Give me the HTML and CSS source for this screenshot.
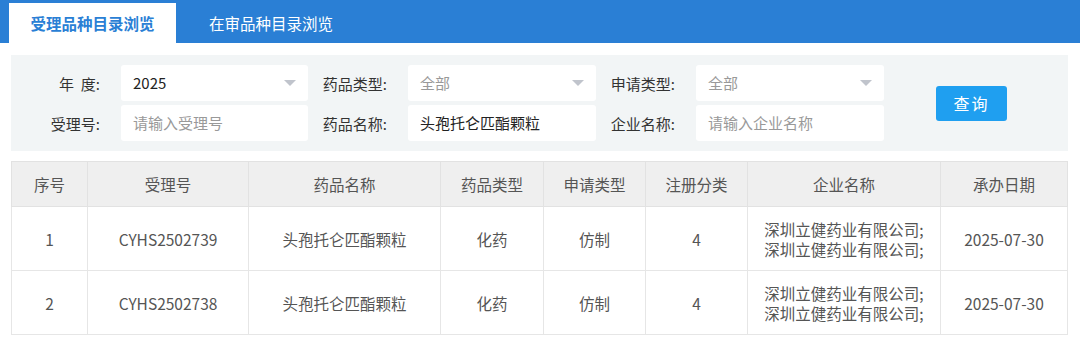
FILE: index.html
```html
<!DOCTYPE html>
<html lang="zh-CN">
<head>
    <meta charset="UTF-8">
    <title>受理品种目录浏览</title>
    <link rel="stylesheet" href="styles.css">
</head>
<body>

    <!-- Tabs -->
    <div class="tabs">
        <div class="tab active">受理品种目录浏览</div>
        <div class="tab">在审品种目录浏览</div>
    </div>

    <!-- Search panel -->
    <div class="search">
        <div class="fields">
            <label>年&nbsp;&nbsp;度:</label>
            <div class="input select">2025<span class="caret"></span></div>
            <label>药品类型:</label>
            <div class="input select muted">全部<span class="caret"></span></div>
            <label>申请类型:</label>
            <div class="input select muted">全部<span class="caret"></span></div>

            <label>受理号:</label>
            <div class="input placeholder">请输入受理号</div>
            <label>药品名称:</label>
            <div class="input">头孢托仑匹酯颗粒</div>
            <label>企业名称:</label>
            <div class="input placeholder">请输入企业名称</div>
        </div>
        <button class="btn">查询</button>
    </div>

    <!-- Result table -->
    <table class="result">
        <thead>
            <tr>
                <th class="c1">序号</th>
                <th class="c2">受理号</th>
                <th class="c3">药品名称</th>
                <th class="c4">药品类型</th>
                <th class="c5">申请类型</th>
                <th class="c6">注册分类</th>
                <th class="c7">企业名称</th>
                <th>承办日期</th>
            </tr>
        </thead>
        <tbody>
            <tr>
                <td>1</td>
                <td>CYHS2502739</td>
                <td>头孢托仑匹酯颗粒</td>
                <td>化药</td>
                <td>仿制</td>
                <td>4</td>
                <td>深圳立健药业有限公司;<br>深圳立健药业有限公司;</td>
                <td>2025-07-30</td>
            </tr>
            <tr>
                <td>2</td>
                <td>CYHS2502738</td>
                <td>头孢托仑匹酯颗粒</td>
                <td>化药</td>
                <td>仿制</td>
                <td>4</td>
                <td>深圳立健药业有限公司;<br>深圳立健药业有限公司;</td>
                <td>2025-07-30</td>
            </tr>
        </tbody>
    </table>

</body>
</html>
```

FILE: styles.css
```css
* {
    margin: 0;
    padding: 0;
    box-sizing: border-box;
}

body {
    font-family: "Noto Sans CJK SC", "Noto Sans", sans-serif;
    background-color: #fff;
    color: #333;
    font-size: 15px;
}

/* Tabs */
.tabs {
    display: flex;
    height: 43px;
    padding: 3px 0 0 9px;
    background-color: #2a7fd5;
}

.tab {
    width: 167px;
    line-height: 40px;
    text-align: center;
    color: #fff;
    font-size: 15.5px;
}

.tab.active {
    background-color: #fff;
    color: #2a7fd5;
    font-weight: 700;
}

.tab + .tab {
    margin-left: 33px;
    width: 124px;
}

/* Search panel */
.search {
    display: flex;
    align-items: center;
    margin: 12px 12px 0 11px;
    height: 96px;
    background-color: #f2f5f6;
}

.fields {
    display: grid;
    grid-template-columns: 110px 187px 100px 188px 100px 188px;
    row-gap: 4px;
    align-items: center;
}

.fields label {
    text-align: right;
    padding-right: 21px;
    color: #333;
}

.input {
    position: relative;
    height: 36px;
    line-height: 36px;
    padding-left: 12px;
    background-color: #fff;
    border-radius: 3px;
    color: #222;
}

.input.muted, .input.placeholder {
    color: #999;
}

.caret {
    position: absolute;
    right: 12px;
    top: 15px;
    border-left: 6px solid transparent;
    border-right: 6px solid transparent;
    border-top: 6px solid #c0c4cc;
}

.btn {
    margin-left: 52px;
    width: 71px;
    height: 35px;
    border: none;
    border-radius: 3px;
    background-color: #1f9ff0;
    color: #fff;
    font-family: inherit;
    font-size: 16px;
    letter-spacing: 2px;
}

/* Result table */
.result {
    margin: 10px 0 0 11px;
    width: 1057px;
    border-collapse: collapse;
    table-layout: fixed;
    color: #555;
    font-size: 15.5px;
}

.result th, .result td {
    border: 1px solid #e6e6e6;
    text-align: center;
    font-weight: 400;
}

.result th {
    height: 45px;
    background-color: #efefef;
    border-color: #e2e2e2;
}

.result td {
    height: 64px;
    line-height: 20px;
}

.result .c1 { width: 76px; }
.result .c2 { width: 161px; }
.result .c3 { width: 192px; }
.result .c4 { width: 103px; }
.result .c5 { width: 102px; }
.result .c6 { width: 102px; }
.result .c7 { width: 193px; }
```
